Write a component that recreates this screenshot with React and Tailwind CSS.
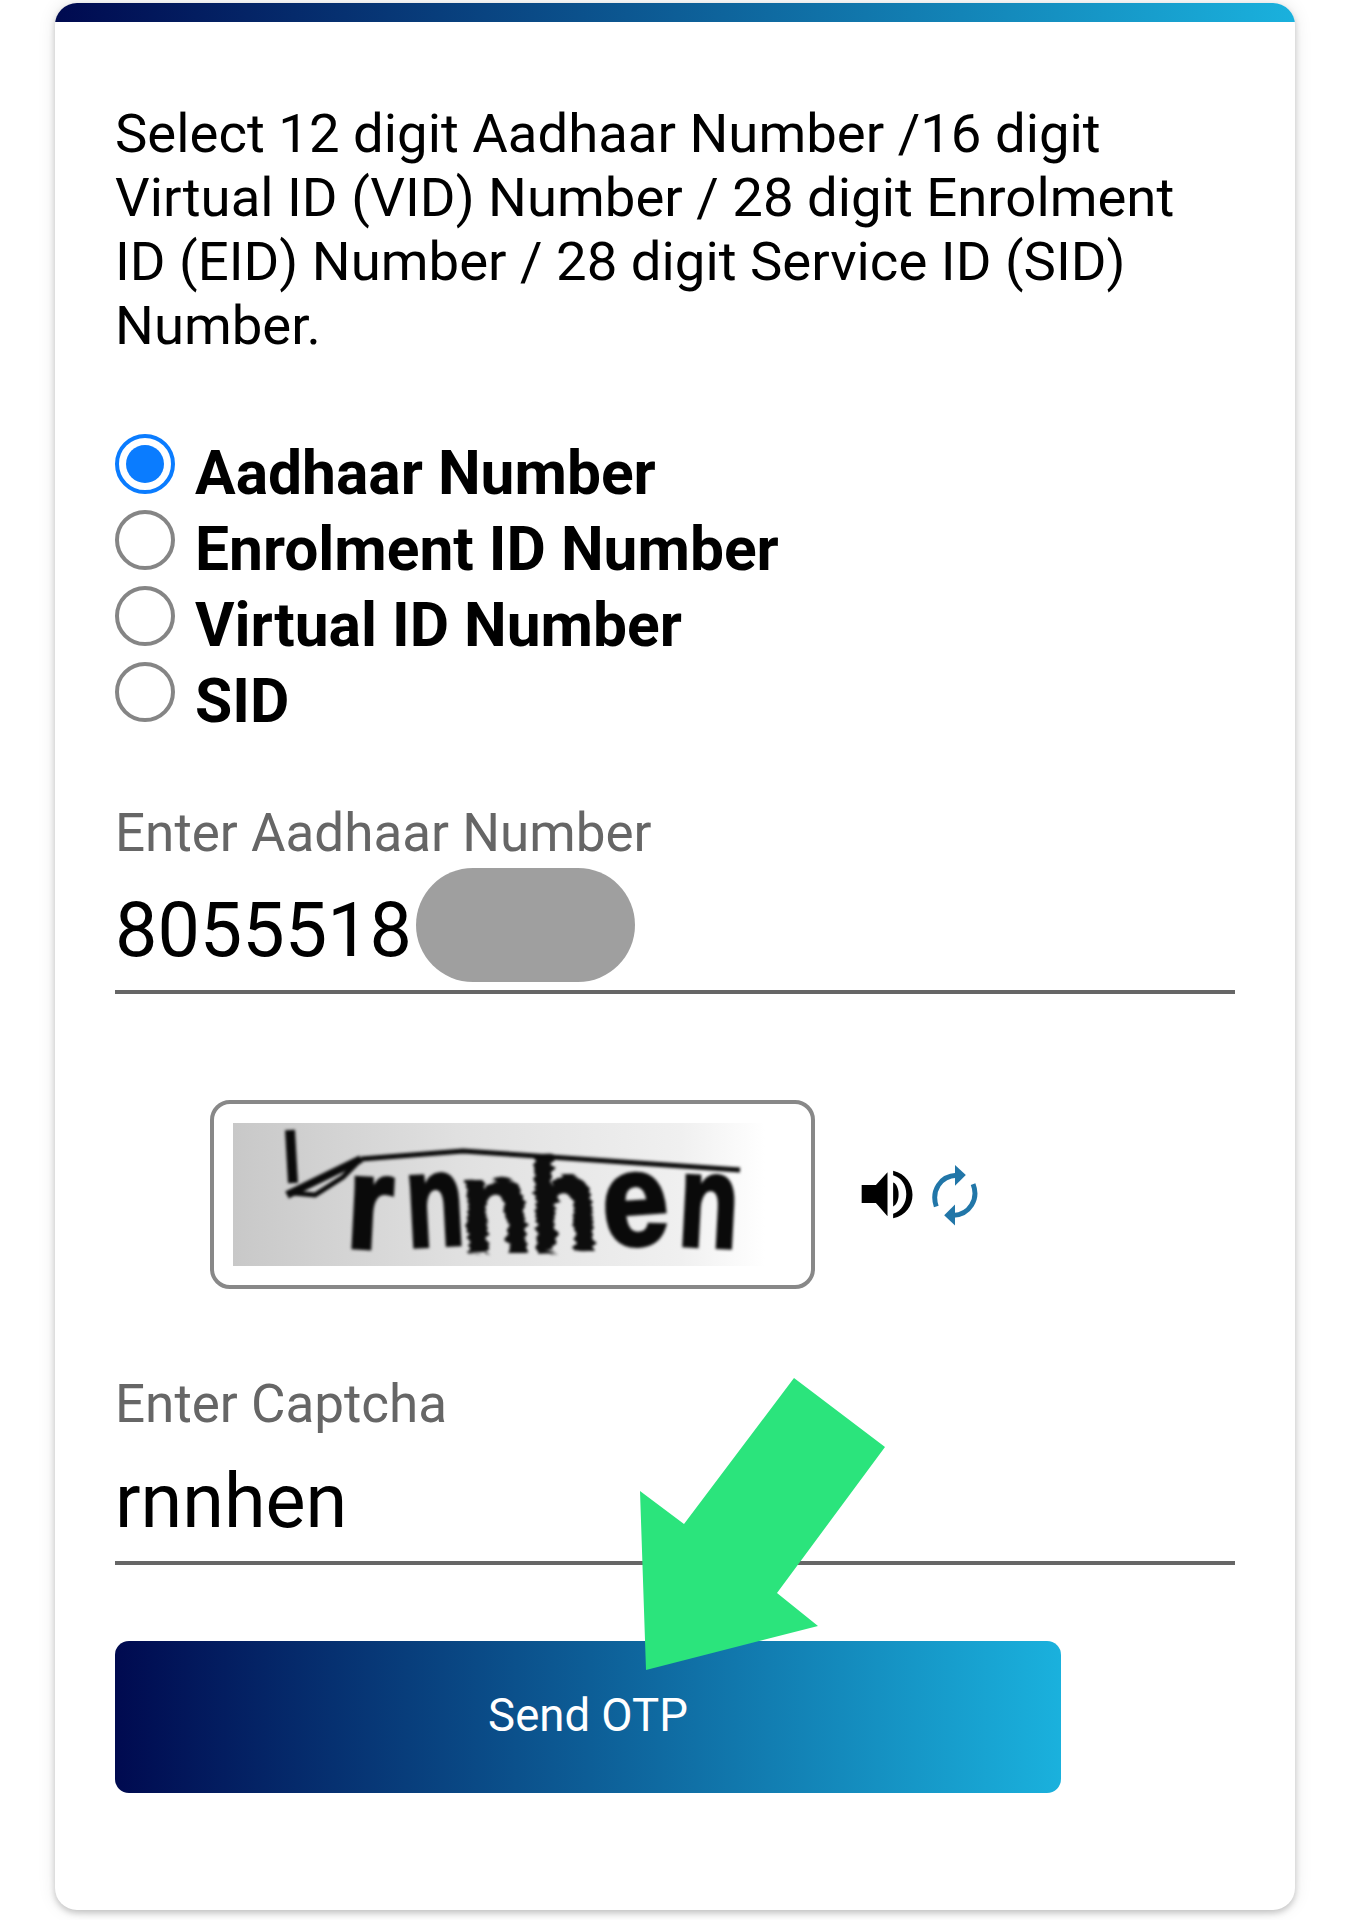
import React from 'react';

const options = ['Aadhaar Number', 'Enrolment ID Number', 'Virtual ID Number', 'SID'];

// letters of the captcha picture: x, baseline, tilt, width squeeze
const captchaLetters = [
  { ch: 'r', x: 112, y: 124, r: 3, sx: 0.9 },
  { ch: 'n', x: 175, y: 124, r: -3, sx: 0.72 },
  { ch: 'n', x: 230, y: 130, r: -3, sx: 0.86, wavy: true },
  { ch: 'h', x: 298, y: 128, r: -2, sx: 0.84, wavy: true },
  { ch: 'e', x: 372, y: 124, r: -4, sx: 0.9 },
  { ch: 'n', x: 444, y: 122, r: 3, sx: 0.74 },
];

function CaptchaImage() {
  return (
    <div className="w-[560px] h-[143px] bg-[linear-gradient(90deg,#c8c8c8,#e0e0e0_40%,#f0f0f0_80%,#ffffff_95%)]">
      <svg width="560" height="143" viewBox="0 0 560 143" className="block overflow-visible">
        <defs>
          <filter id="ripple" x="-10%" y="-10%" width="120%" height="120%">
            <feTurbulence type="fractalNoise" baseFrequency="0.02 0.22" numOctaves="1" seed="4" />
            <feDisplacementMap in="SourceGraphic" scale="12" />
          </filter>
        </defs>
        <g className="blur-[1.4px]">
          {captchaLetters.map((l, i) => (
            <g key={i} filter={l.wavy ? 'url(#ripple)' : undefined}>
              <text
                transform={`translate(${l.x} ${l.y}) rotate(${l.r}) scale(${l.sx} 1)`}
                fontFamily='"Liberation Sans", sans-serif'
                fontWeight="700"
                fontSize="132"
                fill="#0a0a0a"
                stroke="#0a0a0a"
                strokeWidth="4"
              >
                {l.ch}
              </text>
            </g>
          ))}
          <path d="M57 7 L60 60" fill="none" stroke="#0a0a0a" strokeWidth="10" />
          <path d="M54 72 L128 36" fill="none" stroke="#0a0a0a" strokeWidth="8" />
          <path
            d="M128 36 L230 28 L507 47 M60 70 L82 72 L110 54 L128 36"
            fill="none"
            stroke="#0a0a0a"
            strokeWidth="5"
          />
        </g>
      </svg>
    </div>
  );
}

function SpeakerIcon() {
  return (
    <svg width="53" height="49" viewBox="60 90 160 148" className="block">
      <path d="M62 135 H105 L140 97 V230 L105 190 H62 Z" fill="#000" />
      <path d="M157 128 C178 135 180 190 157 200 Z" fill="#000" />
      <path d="M157 92 C235 110 235 220 157 236 V222 C210 205 210 120 157 106 Z" fill="#000" />
    </svg>
  );
}

function RefreshIcon() {
  return (
    <svg width="46" height="62" viewBox="275 70 140 186" className="block">
      <path d="M288 198 C272 150 300 105 350 103" fill="none" stroke="#2176a8" strokeWidth="15" />
      <path d="M345 72 L378 102 L345 135 Z" fill="#2176a8" />
      <path d="M400 130 C418 175 390 222 340 225" fill="none" stroke="#2176a8" strokeWidth="15" />
      <path d="M345 192 L312 225 L345 256 Z" fill="#2176a8" />
    </svg>
  );
}

function Field({ label, value, children }) {
  return (
    <div>
      <div className="text-[53px] leading-[64px] text-[#666666]">{label}</div>
      <div className="relative h-[129px] w-[1120px] pt-[6px] flex items-center border-b-[4px] border-[#666666] text-[75.5px] text-black">
        {value}
        {children}
      </div>
    </div>
  );
}

export default function App() {
  return (
    <div className="relative w-[1350px] h-[1920px] bg-white overflow-hidden font-['Roboto',sans-serif]">
      <div className="ml-[55px] mt-[3px] w-[1240px] h-[1907px] bg-white rounded-[22px] shadow-[0_3px_6px_rgba(0,0,0,0.2),0_0_18px_rgba(0,0,0,0.1)] overflow-hidden">
        {/* Top accent bar */}
        <div className="h-[19px] bg-[linear-gradient(90deg,#000a50,#1ab1dd)]" />

        <div className="pl-[60px] pt-[79px]">
          <p className="w-[1100px] text-[54.5px] leading-[64px] text-black">
            Select 12 digit Aadhaar Number /16 digit Virtual ID (VID) Number / 28 digit Enrolment ID (EID) Number / 28 digit Service ID (SID) Number.
          </p>

          {/* Radios */}
          <div className="mt-[77px] flex flex-col">
            {options.map((o, i) => (
              <div key={o} className="flex h-[76px] gap-[20px]">
                {i === 0 ? (
                  <div className="w-[60px] h-[60px] rounded-full border-[4px] border-[#0a7cff] flex items-center justify-center">
                    <div className="w-[38px] h-[38px] rounded-full bg-[#0a7cff]" />
                  </div>
                ) : (
                  <div className="w-[60px] h-[60px] rounded-full border-[4px] border-[#858585]" />
                )}
                <span className="pt-[2px] text-[60.5px] leading-[76px] font-bold text-black">{o}</span>
              </div>
            ))}
          </div>

          <div className="mt-[63px]">
            <Field label="Enter Aadhaar Number" value="8055518">
              {/* Blurred out digits */}
              <div className="absolute left-[301px] top-[3px] w-[219px] h-[114px] rounded-full bg-[#9f9f9f]" />
            </Field>
          </div>

          {/* Captcha */}
          <div className="mt-[106px] ml-[95px] flex items-center">
            <div className="w-[605px] h-[189px] rounded-[20px] border-[4px] border-[#888888] flex items-center justify-center">
              <CaptchaImage />
            </div>
            <div className="ml-[46px] mr-[18px]">
              <SpeakerIcon />
            </div>
            <RefreshIcon />
          </div>

          <div className="mt-[83px]">
            <Field label="Enter Captcha" value="rnnhen" />
          </div>

          <button className="mt-[76px] block w-[946px] h-[152px] pb-[2px] rounded-[14px] bg-[linear-gradient(90deg,#000a50,#1ab1dd)] text-white text-[45.5px]">
            Send OTP
          </button>
        </div>
      </div>

      {/* Green pointer drawn over the form */}
      <svg width="1350" height="1920" viewBox="0 0 1350 1920" className="absolute inset-0 pointer-events-none">
        <polygon points="794,1378 885,1447 777,1593 818,1626 646,1670 640,1491 684,1524" fill="#2be47c" />
      </svg>
    </div>
  );
}
